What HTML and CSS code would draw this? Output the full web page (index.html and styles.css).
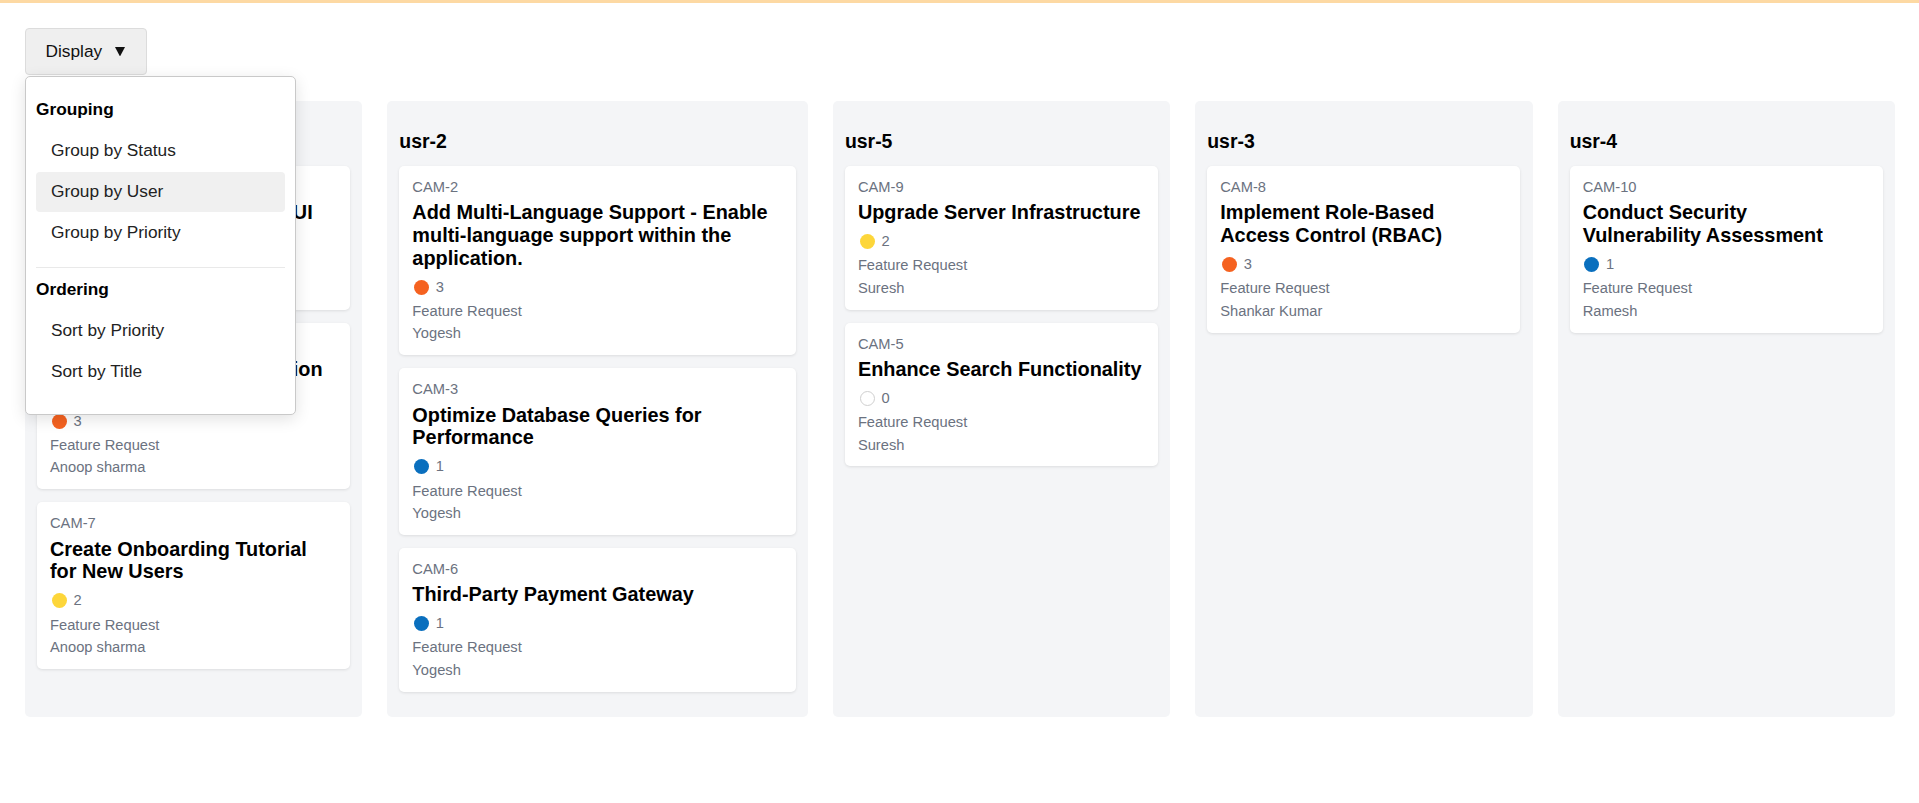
FILE: index.html
```html
<!DOCTYPE html>
<html lang="en">
<head>
<meta charset="utf-8">
<title>Kanban Board</title>
<link rel="stylesheet" href="styles.css">
</head>
<body>
<div class="app">
  <header class="toolbar">
    <div class="display">
      <button class="display-btn" type="button">Display<svg class="caret" viewBox="0 0 10 9.5" aria-hidden="true"><path d="M0 0H10L5 9.5Z"/></svg></button>
      <div class="menu">
        <div class="menu-section">
          <div class="menu-heading">Grouping</div>
          <div class="menu-item">Group by Status</div>
          <div class="menu-item active">Group by User</div>
          <div class="menu-item">Group by Priority</div>
        </div>
        <div class="menu-section second">
          <div class="menu-heading">Ordering</div>
          <div class="menu-item">Sort by Priority</div>
          <div class="menu-item">Sort by Title</div>
        </div>
      </div>
    </div>
  </header>

  <main class="board">
    <section class="column">
      <h3 class="column-title">usr-1</h3>
      <div class="card">
        <div class="card-id">CAM-1</div>
        <div class="card-title">Update User Profile Page UI</div>
        <div class="card-priority"><span class="dot p4"></span>4</div>
        <div class="card-tag">Feature Request</div>
        <div class="card-user">Anoop sharma</div>
      </div>
      <div class="card">
        <div class="card-id">CAM-4</div>
        <div class="card-title">Implement Email Notification System</div>
        <div class="card-priority"><span class="dot p3"></span>3</div>
        <div class="card-tag">Feature Request</div>
        <div class="card-user">Anoop sharma</div>
      </div>
      <div class="card">
        <div class="card-id">CAM-7</div>
        <div class="card-title">Create Onboarding Tutorial for New Users</div>
        <div class="card-priority"><span class="dot p2"></span>2</div>
        <div class="card-tag">Feature Request</div>
        <div class="card-user">Anoop sharma</div>
      </div>
    </section>

    <section class="column">
      <h3 class="column-title">usr-2</h3>
      <div class="card">
        <div class="card-id">CAM-2</div>
        <div class="card-title">Add Multi-Language Support - Enable multi-language support within the application.</div>
        <div class="card-priority"><span class="dot p3"></span>3</div>
        <div class="card-tag">Feature Request</div>
        <div class="card-user">Yogesh</div>
      </div>
      <div class="card">
        <div class="card-id">CAM-3</div>
        <div class="card-title">Optimize Database Queries for Performance</div>
        <div class="card-priority"><span class="dot p1"></span>1</div>
        <div class="card-tag">Feature Request</div>
        <div class="card-user">Yogesh</div>
      </div>
      <div class="card">
        <div class="card-id">CAM-6</div>
        <div class="card-title">Third-Party Payment Gateway</div>
        <div class="card-priority"><span class="dot p1"></span>1</div>
        <div class="card-tag">Feature Request</div>
        <div class="card-user">Yogesh</div>
      </div>
    </section>

    <section class="column">
      <h3 class="column-title">usr-5</h3>
      <div class="card">
        <div class="card-id">CAM-9</div>
        <div class="card-title">Upgrade Server Infrastructure</div>
        <div class="card-priority"><span class="dot p2"></span>2</div>
        <div class="card-tag">Feature Request</div>
        <div class="card-user">Suresh</div>
      </div>
      <div class="card">
        <div class="card-id">CAM-5</div>
        <div class="card-title">Enhance Search Functionality</div>
        <div class="card-priority"><span class="dot p0"></span>0</div>
        <div class="card-tag">Feature Request</div>
        <div class="card-user">Suresh</div>
      </div>
    </section>

    <section class="column">
      <h3 class="column-title">usr-3</h3>
      <div class="card">
        <div class="card-id">CAM-8</div>
        <div class="card-title">Implement Role-Based Access Control (RBAC)</div>
        <div class="card-priority"><span class="dot p3"></span>3</div>
        <div class="card-tag">Feature Request</div>
        <div class="card-user">Shankar Kumar</div>
      </div>
    </section>

    <section class="column">
      <h3 class="column-title">usr-4</h3>
      <div class="card">
        <div class="card-id">CAM-10</div>
        <div class="card-title">Conduct Security Vulnerability Assessment</div>
        <div class="card-priority"><span class="dot p1"></span>1</div>
        <div class="card-tag">Feature Request</div>
        <div class="card-user">Ramesh</div>
      </div>
    </section>
  </main>
</div>
</body>
</html>
```

FILE: styles.css
```css
* {
  box-sizing: border-box;
}

body {
  margin: 0;
  background: #ffffff;
  color: #000000;
  font-family: "Liberation Sans", Arial, sans-serif;
}

.app {
  border-top: 3px solid #fdd9a3;
  padding: 25px 24px 40px 25px;
}

.toolbar {
  display: flex;
}

.display {
  position: relative;
}

.display-btn {
  display: flex;
  align-items: center;
  height: 47.3px;
  padding: 0 20.7px 0 19.5px;
  font-family: "Liberation Sans", Arial, sans-serif;
  font-size: 17.28px;
  line-height: 19.86px;
  color: #111111;
  background: #efefef;
  border: 1px solid #dcdcdc;
  border-radius: 4px;
}

.caret {
  width: 10px;
  height: 9.5px;
  margin-left: 12.7px;
  fill: #111111;
}

.menu {
  position: absolute;
  top: 100%;
  left: 0;
  margin-top: 1px;
  width: 271px;
  padding: 10px 10px 22px;
  background: #ffffff;
  border: 1px solid #c9c9c9;
  border-radius: 5px;
  box-shadow: 0 4px 16px rgba(0, 0, 0, 0.12);
  z-index: 10;
}

.menu-section {
  padding-bottom: 13.3px;
}

.menu-section.second {
  padding-bottom: 0;
  border-top: 1px solid #e9e9e9;
}

.menu-heading {
  margin: 13px 0 10.6px;
  font-size: 17.28px;
  line-height: 19.86px;
  font-weight: bold;
  color: #000000;
}

.menu-section.second .menu-heading {
  margin-top: 12.4px;
}

.menu-item {
  padding: 10.5px 15px;
  font-size: 17.28px;
  line-height: 19.86px;
  color: #222222;
  border-radius: 4px;
}

.menu-item.active {
  background: #f0f0f0;
}

.board {
  display: grid;
  grid-template-columns: 1fr 1.2465fr 1fr 1fr 1fr;
  gap: 25px;
  margin-top: 25.7px;
  align-items: stretch;
}

.column {
  background: #f4f5f7;
  border-radius: 5px;
  padding: 12px 12.3px 12px 12px;
}

.column-title {
  margin: 17.5px 0 13.2px;
  font-size: 19.44px;
  line-height: 22.3px;
  font-weight: bold;
  color: #000000;
}

.card {
  background: #ffffff;
  border-radius: 5px;
  box-shadow: 0 1px 3px rgba(0, 0, 0, 0.1);
  padding: 13px 13.5px 13px 13px;
  margin-bottom: 13px;
}

.card-id,
.card-tag,
.card-user {
  font-size: 14.7px;
  line-height: 16.9px;
  color: #6b7280;
}

.card-title {
  margin: 5.4px 0 9.1px;
  font-size: 19.87px;
  line-height: 22.83px;
  font-weight: bold;
  color: #000000;
}

.card-priority {
  display: flex;
  align-items: center;
  gap: 6.8px;
  margin-bottom: 7.4px;
  font-size: 14.7px;
  line-height: 16.9px;
  color: #6b7280;
}

.card-tag {
  margin-bottom: 5.4px;
}

.dot {
  width: 15px;
  height: 15px;
  margin-left: 1.7px;
  border-radius: 50%;
  flex: none;
}

.dot.p4 {
  background: #e53935;
}

.dot.p3 {
  background: #f56220;
}

.dot.p2 {
  background: #fdd63a;
}

.dot.p1 {
  background: #0a6fbe;
}

.dot.p0 {
  background: #ffffff;
  border: 1px solid #cfcfcf;
}
```
